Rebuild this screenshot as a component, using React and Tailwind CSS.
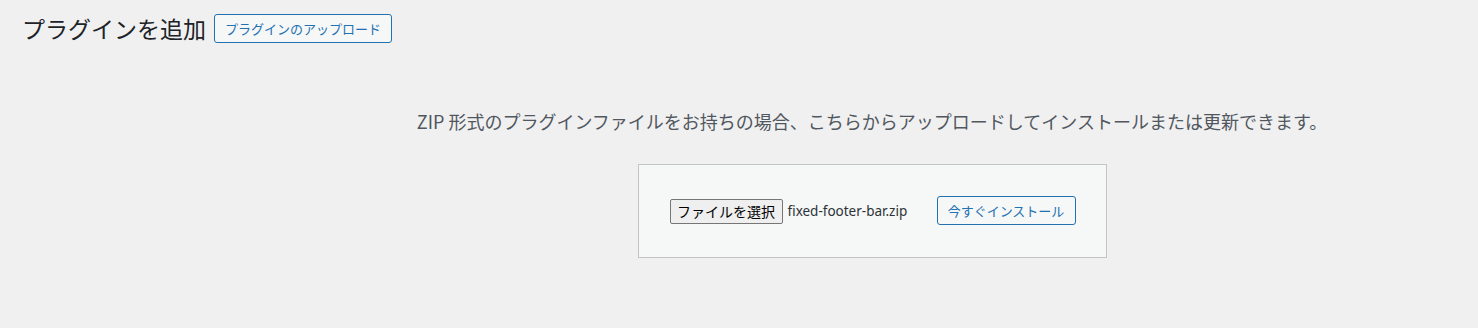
export default function App() {
  const jp = { fontFamily: '"Noto Sans CJK JP", "Noto Sans", sans-serif' };
  const latin = { fontFamily: '"Noto Sans", "Noto Sans CJK JP", sans-serif' };
  return (
    <div className="w-full h-[328px] bg-[#f0f0f1] overflow-hidden" style={jp}>
      <div className="flex items-center pl-[22px] pt-[14px] h-[43px]">
        <h1 className="text-[23px] leading-[29px] font-normal text-[#1d2327]">プラグインを追加</h1>
        <button className="ml-[8px] w-[178px] h-[29px] border border-[#2271b1] rounded-[3px] bg-[#f6f7f7] text-[#2271b1] text-[13px] leading-[27px] flex items-center justify-center">
          プラグインのアップロード
        </button>
      </div>
      <div className="pl-[266px] flex flex-col items-center">
        <p className="mt-[65px] h-[27px] text-[18px] leading-[27px] text-[#50575e] whitespace-nowrap">
          ZIP 形式のプラグインファイルをお持ちの場合、こちらからアップロードしてインストールまたは更新できます。
        </p>
        <div className="mt-[29px] w-[469px] h-[94px] border border-[#c3c4c7] bg-[#f6f7f7] flex items-center pl-[31px]">
          <div className="w-[113px] h-[25px] border border-[#767676] rounded-[2px] bg-[#efefef] text-black text-[14px] leading-[23px] flex items-center justify-center">
            ファイルを選択
          </div>
          <span className="ml-[5px] w-[124px] text-[13.5px] text-[#2c3338] whitespace-nowrap" style={latin}>
            fixed-footer-bar.zip
          </span>
          <button className="ml-[25px] -mt-[1px] w-[139px] h-[29px] border border-[#2271b1] rounded-[3px] bg-[#f6f7f7] text-[#2271b1] text-[13px] flex items-center justify-center">
            今すぐインストール
          </button>
        </div>
      </div>
    </div>
  );
}
